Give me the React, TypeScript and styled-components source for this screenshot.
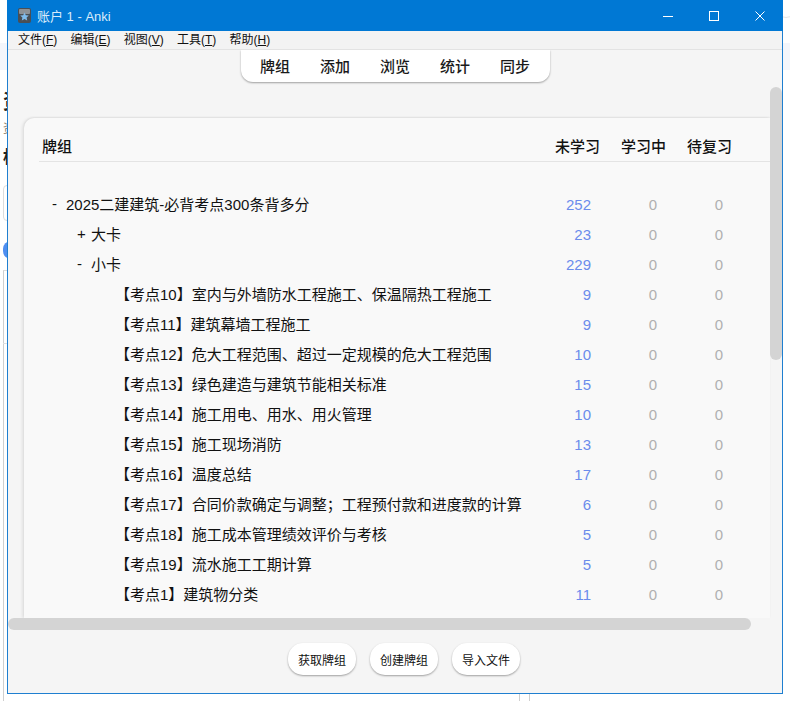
import React from "react";
import styled, { createGlobalStyle } from "styled-components";

const FONT = `"Liberation Sans", "Noto Sans CJK SC", sans-serif`;

const Global = createGlobalStyle`
  html, body { margin: 0; padding: 0; background: #fff; }
  body { font-family: ${FONT}; overflow: hidden; }
  #root { width: 790px; height: 701px; }
`;

const Desktop = styled.div`
  position: relative;
  width: 790px;
  height: 701px;
  overflow: hidden;
  background: #fff;
`;

/* The page behind the window: only slivers of it stay visible */
const BackBand = styled.div`
  position: absolute;
  left: 0;
  top: 43px;
  width: 790px;
  height: 27px;
  background: #f4f6fb;
`;
const BackText = styled.span<{ $top: number; $size: number; $color: string; $weight: number }>`
  position: absolute;
  left: 3px;
  top: ${(p) => p.$top}px;
  font-size: ${(p) => p.$size}px;
  line-height: 1;
  font-weight: ${(p) => p.$weight};
  color: ${(p) => p.$color};
`;
const BackInput = styled.div`
  position: absolute;
  left: 3px;
  top: 185px;
  width: 20px;
  height: 36px;
  box-sizing: border-box;
  border: 1px solid #dcdcdc;
  border-radius: 4px;
`;
const BackPill = styled.div`
  position: absolute;
  left: 3px;
  top: 241px;
  width: 20px;
  height: 18px;
  border-radius: 8px;
  background: #4f8ef0;
`;
const BackPanel = styled.div`
  position: absolute;
  left: 3px;
  top: 270px;
  width: 20px;
  height: 440px;
  box-sizing: border-box;
  border-left: 1px solid #cfcfcf;
  border-top: 1px solid #dcdcdc;
`;
const BackRule = styled.div`
  position: absolute;
  left: 3px;
  top: 343px;
  width: 4px;
  height: 1px;
  background: #e0e0e0;
`;
const BackLine = styled.div<{ $left: number }>`
  position: absolute;
  left: ${(p) => p.$left}px;
  top: 690px;
  width: 1px;
  height: 11px;
  background: #cfcfcf;
`;
const BackCircle = styled.div`
  position: absolute;
  left: 770px;
  top: -14px;
  width: 32px;
  height: 32px;
  box-sizing: border-box;
  border: 1px solid #e6e6e6;
  border-radius: 50%;
`;

const Window = styled.div`
  position: absolute;
  left: 7px;
  top: 0;
  width: 776px;
  height: 694px;
  box-sizing: border-box;
  display: flex;
  flex-direction: column;
  border: 1px solid #1f7fd0;
  border-top: 0;
  background: #f5f5f5;
`;

const TitleBar = styled.div`
  flex: none;
  height: 31px;
  margin: 0 -1px;
  display: flex;
  align-items: center;
  background: #0078d4;
  color: #fff;
`;
const AppIcon = styled.svg`
  width: 13px;
  height: 15px;
  margin-left: 11px;
  flex: none;
`;
const Title = styled.div`
  margin-left: 6px;
  flex: 1;
  font-size: 13px;
  color: #d8ebfa;
  white-space: nowrap;
`;
const Controls = styled.div`
  display: flex;
  height: 100%;
`;
const ControlButton = styled.div`
  width: 46px;
  display: flex;
  align-items: center;
  justify-content: center;
`;
const ControlIcon = styled.svg`
  width: 12px;
  height: 12px;
  fill: none;
  stroke: #fff;
  stroke-width: 1;
`;

const MenuBar = styled.div`
  flex: none;
  height: 17px;
  padding: 1px 0 0 3.4px;
  box-sizing: content-box;
  display: flex;
  align-items: center;
  background: #f3f3f3;
  border-bottom: 1px solid #e3e3e3;
  font-size: 12px;
  color: #111;
`;
const MenuItem = styled.span`
  padding: 0 6.6px;
  white-space: nowrap;
  line-height: 17px;
  & u { text-underline-offset: 1px; }
`;

const Viewport = styled.div`
  position: relative;
  flex: 1;
  min-height: 0;
  overflow: hidden;
  display: flex;
  flex-direction: column;
  align-items: stretch;
`;
const NavWrap = styled.div`
  flex: none;
  display: flex;
  justify-content: center;
`;
const Nav = styled.nav`
  display: flex;
  height: 32px;
  margin-left: 1px;
  padding: 2px 5px 0 4px;
  box-sizing: border-box;
  align-items: center;
  background: #fff;
  border-radius: 0 0 12px 12px;
  box-shadow: 0 1px 2px rgba(0, 0, 0, 0.35);
`;
const NavLink = styled.span`
  padding: 0 15px;
  font-size: 15px;
  font-weight: 500;
  line-height: 30px;
  color: #1a1a1a;
`;

const Card = styled.section`
  flex: 1;
  margin: 36px 12px 0 16px;
  padding: 15px 0 0 15px;
  background: #f9f9f9;
  border-radius: 10px 0 0 0;
  box-shadow: -2px 0 3px rgba(0, 0, 0, 0.08), 0 -1px 2px rgba(0, 0, 0, 0.06);
`;

const Row = styled.div`
  display: grid;
  grid-template-columns: 1fr 66px 66px 66px;
  padding-right: 38px;
  align-items: center;
`;
const HeadRow = styled(Row)`
  height: 28px;
  margin-bottom: 26px;
  align-items: start;
  border-bottom: 1px solid #e4e4e4;
  font-size: 15px;
  font-weight: 500;
  line-height: 27px;
  color: #111;
`;
const HeadName = styled.div`
  padding-left: 3px;
`;
const HeadCount = styled.div`
  text-align: right;
`;
const DeckRow = styled(Row)`
  height: 30px;
  font-size: 15px;
  color: #111;
`;
const DeckName = styled.div<{ $depth: number }>`
  display: flex;
  align-items: center;
  white-space: nowrap;
  padding-left: ${(p) => (p.$depth === 2 ? 76 : 13 + p.$depth * 25)}px;
`;
const Twisty = styled.span`
  flex: none;
  width: 14px;
  line-height: 1;
`;
const Count = styled.div<{ $zero?: boolean }>`
  text-align: right;
  padding: 2px 9px 0 0;
  color: ${(p) => (p.$zero ? "#b0b0b0" : "#6b8cec")};
`;

const VThumb = styled.div`
  position: absolute;
  right: 0;
  top: 37px;
  width: 12px;
  height: 273px;
  background: #d4d4d4;
  border-radius: 6px;
`;

const HBar = styled.div`
  flex: none;
  height: 12px;
`;
const HThumb = styled.div`
  width: 743px;
  height: 12px;
  background: #d4d4d4;
  border-radius: 6px;
`;

const Footer = styled.div`
  flex: none;
  height: 63px;
  padding: 13px 0 0 18px;
  box-sizing: border-box;
  display: flex;
  justify-content: center;
  gap: 14px;
`;
const Btn = styled.button`
  width: 68px;
  height: 32px;
  padding: 0;
  border: 0;
  border-radius: 15px;
  background: #fff;
  box-shadow: 0 1px 2px rgba(0, 0, 0, 0.35);
  font-family: ${FONT};
  font-size: 12px;
  color: #111;
`;

type Deck = { name: string; depth: number; twisty?: string; n: number };
const decks: Deck[] = [
  { name: "2025二建建筑-必背考点300条背多分", depth: 0, twisty: "-", n: 252 },
  { name: "大卡", depth: 1, twisty: "+", n: 23 },
  { name: "小卡", depth: 1, twisty: "-", n: 229 },
  { name: "【考点10】室内与外墙防水工程施工、保温隔热工程施工", depth: 2, n: 9 },
  { name: "【考点11】建筑幕墙工程施工", depth: 2, n: 9 },
  { name: "【考点12】危大工程范围、超过一定规模的危大工程范围", depth: 2, n: 10 },
  { name: "【考点13】绿色建造与建筑节能相关标准", depth: 2, n: 15 },
  { name: "【考点14】施工用电、用水、用火管理", depth: 2, n: 10 },
  { name: "【考点15】施工现场消防", depth: 2, n: 13 },
  { name: "【考点16】温度总结", depth: 2, n: 17 },
  { name: "【考点17】合同价款确定与调整；工程预付款和进度款的计算", depth: 2, n: 6 },
  { name: "【考点18】施工成本管理绩效评价与考核", depth: 2, n: 5 },
  { name: "【考点19】流水施工工期计算", depth: 2, n: 5 },
  { name: "【考点1】建筑物分类", depth: 2, n: 11 },
];

const menus: [string, string][] = [
  ["文件", "F"],
  ["编辑", "E"],
  ["视图", "V"],
  ["工具", "T"],
  ["帮助", "H"],
];

export default function App() {
  return (
    <Desktop>
      <Global />
      <BackBand />
      <BackCircle />
      <BackText $top={92} $size={20} $color="#222" $weight={700}>资</BackText>
      <BackText $top={123} $size={12} $color="#8a7a66" $weight={400}>资</BackText>
      <BackText $top={149} $size={17} $color="#222" $weight={700}>标</BackText>
      <BackInput />
      <BackPill />
      <BackPanel />
      <BackRule />
      <BackLine $left={519} />
      <BackLine $left={529} />
      <Window>
        <TitleBar>
          <AppIcon viewBox="0 0 13 15">
            <rect x="0" y="0" width="13" height="15" rx="2" fill="#4a4f55" />
            <rect x="1" y="1" width="11" height="5" rx="1" fill="#8d9297" />
            <path d="M6.5 4.5l1.3 2.7 3 .4-2.2 2 .6 3-2.7-1.5-2.7 1.5.6-3-2.2-2 3-.4z" fill="#7fbcec" />
          </AppIcon>
          <Title>账户 1 - Anki</Title>
          <Controls>
            <ControlButton>
              <ControlIcon viewBox="0 0 12 12"><path d="M1 6.5h10" /></ControlIcon>
            </ControlButton>
            <ControlButton>
              <ControlIcon viewBox="0 0 12 12"><rect x="1.5" y="1.5" width="9" height="9" /></ControlIcon>
            </ControlButton>
            <ControlButton>
              <ControlIcon viewBox="0 0 12 12"><path d="M1.5 1.5l9 9M10.5 1.5l-9 9" /></ControlIcon>
            </ControlButton>
          </Controls>
        </TitleBar>
        <MenuBar>
          {menus.map(([label, key]) => (
            <MenuItem key={key}>
              {label}(<u>{key}</u>)
            </MenuItem>
          ))}
        </MenuBar>
        <Viewport>
          <NavWrap>
            <Nav>
              {["牌组", "添加", "浏览", "统计", "同步"].map((t) => (
                <NavLink key={t}>{t}</NavLink>
              ))}
            </Nav>
          </NavWrap>
          <Card>
            <HeadRow>
              <HeadName>牌组</HeadName>
              <HeadCount>未学习</HeadCount>
              <HeadCount>学习中</HeadCount>
              <HeadCount>待复习</HeadCount>
            </HeadRow>
            {decks.map((d) => (
              <DeckRow key={d.name}>
                <DeckName $depth={d.depth}>
                  {d.twisty && <Twisty>{d.twisty}</Twisty>}
                  <span>{d.name}</span>
                </DeckName>
                <Count>{d.n}</Count>
                <Count $zero>0</Count>
                <Count $zero>0</Count>
              </DeckRow>
            ))}
          </Card>
          <VThumb />
        </Viewport>
        <HBar>
          <HThumb />
        </HBar>
        <Footer>
          <Btn>获取牌组</Btn>
          <Btn>创建牌组</Btn>
          <Btn>导入文件</Btn>
        </Footer>
      </Window>
    </Desktop>
  );
}
